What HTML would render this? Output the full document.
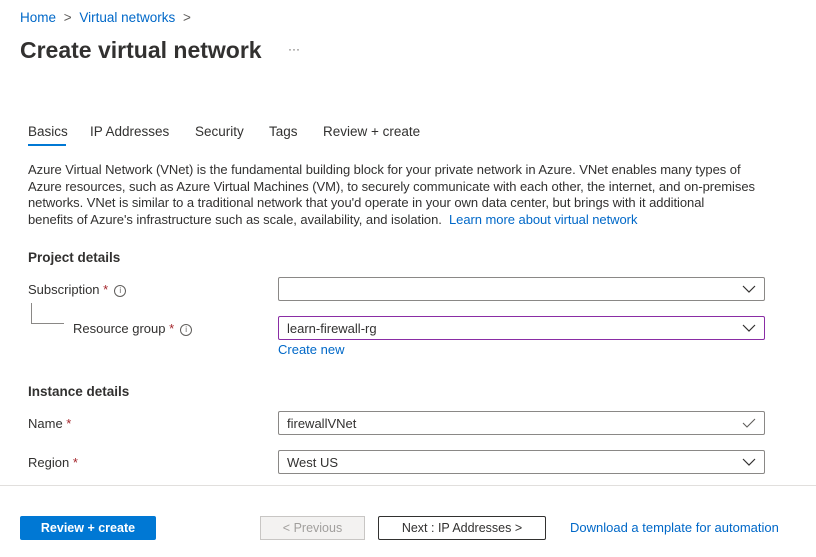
<!DOCTYPE html>
<html><head><style>
*{margin:0;padding:0;box-sizing:border-box}
body{width:816px;height:557px;background:#fff;font-family:"Liberation Sans",sans-serif;color:#323130;position:relative;overflow:hidden;font-size:13px}
.a{position:absolute;white-space:nowrap}
.link{color:#0068c8}
.inp{position:absolute;left:278px;width:487px;height:24px;border:1px solid #8a8886;border-radius:2px;font-size:13px;padding:4px 8px;color:#323130}
.chev{position:absolute;right:8px;top:7px}
.lbl{font-size:13px}
.req{color:#a4262c}
.info{display:inline-block;width:12px;height:12px;border:1px solid #605e5c;border-radius:50%;font-size:8px;text-align:center;line-height:10px;vertical-align:middle;margin-left:6px;color:#605e5c}
.desc{font-size:13px;letter-spacing:-0.05px;line-height:16.7px}
</style></head><body>
<div class="a link" style="left:20px;top:10px;font-size:13.5px">Home <span style="color:#605e5c;margin:0 4px">&gt;</span> Virtual networks <span style="color:#605e5c;margin-left:4px">&gt;</span></div>
<div class="a" style="left:20px;top:37px;font-size:23px;font-weight:bold;color:#323130">Create virtual network</div>
<div class="a" style="left:288px;top:42px;font-size:12px;color:#605e5c">···</div>

<div class="a" style="left:28px;top:124px;font-size:13.5px">Basics</div>
<div class="a" style="left:28px;top:144px;width:38px;height:2px;background:#0078d4"></div>
<div class="a" style="left:90px;top:124px;font-size:13.5px">IP Addresses</div>
<div class="a" style="left:195px;top:124px;font-size:13.5px">Security</div>
<div class="a" style="left:269px;top:124px;font-size:13.5px">Tags</div>
<div class="a" style="left:323px;top:124px;font-size:13.5px">Review + create</div>

<div class="a desc" style="left:28px;top:162px">Azure Virtual Network (VNet) is the fundamental building block for your private network in Azure. VNet enables many types of<br>Azure resources, such as Azure Virtual Machines (VM), to securely communicate with each other, the internet, and on-premises<br>networks. VNet is similar to a traditional network that you'd operate in your own data center, but brings with it additional<br>benefits of Azure's infrastructure such as scale, availability, and isolation. &nbsp;<span class="link">Learn more about virtual network</span></div>

<div class="a" style="left:28px;top:250px;font-size:13.5px;font-weight:bold">Project details</div>
<div class="a lbl" style="left:28px;top:282px">Subscription <span class="req">*</span><span class="info">i</span></div>
<div class="a" style="left:31px;top:303px;width:1px;height:21px;background:#8a8886"></div>
<div class="a" style="left:31px;top:323px;width:33px;height:1px;background:#8a8886"></div>
<div class="a lbl" style="left:73px;top:321px">Resource group <span class="req">*</span><span class="info">i</span></div>

<div class="inp" style="top:277px"><svg class="chev" width="14" height="8" viewBox="0 0 14 8"><path d="M1 1l6 6 6-6" fill="none" stroke="#323130" stroke-width="1.2"/></svg></div>
<div class="inp" style="top:316px;border-color:#8a2da5">learn-firewall-rg<svg class="chev" width="14" height="8" viewBox="0 0 14 8"><path d="M1 1l6 6 6-6" fill="none" stroke="#323130" stroke-width="1.2"/></svg></div>
<div class="a link" style="left:278px;top:342px;font-size:13px">Create new</div>

<div class="a" style="left:28px;top:384px;font-size:13.5px;font-weight:bold">Instance details</div>
<div class="a lbl" style="left:28px;top:416px">Name <span class="req">*</span></div>
<div class="inp" style="top:411px">firewallVNet<svg class="chev" width="14" height="10" viewBox="0 0 14 10" style="top:6px"><path d="M1 5l4 4 8-8" fill="none" stroke="#605e5c" stroke-width="1.1"/></svg></div>
<div class="a lbl" style="left:28px;top:455px">Region <span class="req">*</span></div>
<div class="inp" style="top:450px">West US<svg class="chev" width="14" height="8" viewBox="0 0 14 8"><path d="M1 1l6 6 6-6" fill="none" stroke="#323130" stroke-width="1.2"/></svg></div>

<div class="a" style="left:0;top:485px;width:816px;height:1px;background:#e1dfdd"></div>
<div class="a" style="left:20px;top:516px;width:136px;height:24px;background:#0078d4;border-radius:2px;color:#fff;font-weight:bold;font-size:12.5px;text-align:center;line-height:24px">Review + create</div>
<div class="a" style="left:260px;top:516px;width:105px;height:24px;background:#f3f2f1;border:1px solid #c8c6c4;color:#a19f9d;font-size:12.5px;text-align:center;line-height:22px">&lt; Previous</div>
<div class="a" style="left:378px;top:516px;width:168px;height:24px;border:1px solid #323130;border-radius:2px;font-size:12.5px;text-align:center;line-height:22px">Next : IP Addresses &gt;</div>
<div class="a link" style="left:570px;top:520px;font-size:13px">Download a template for automation</div>
</body></html>
